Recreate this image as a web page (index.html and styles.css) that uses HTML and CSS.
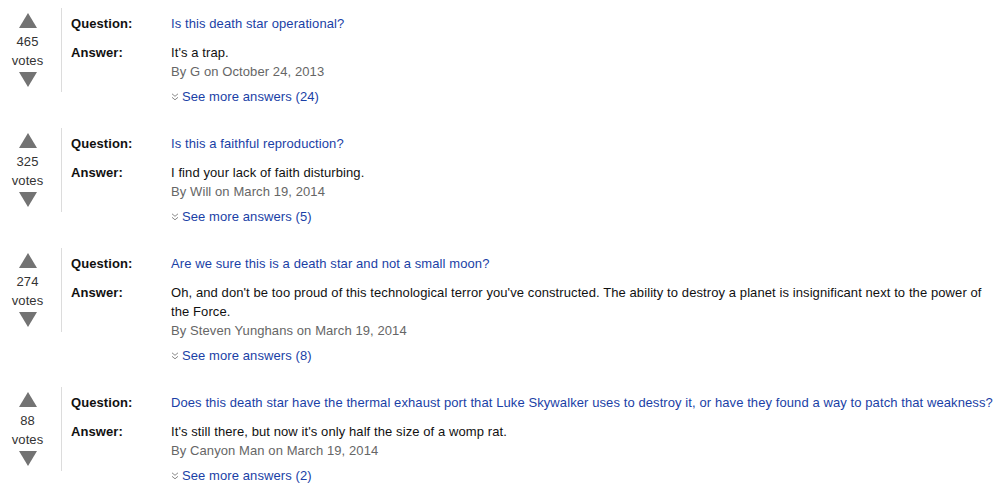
FILE: index.html
```html
<!DOCTYPE html>
<html>
<head>
<meta charset="utf-8">
<link rel="stylesheet" href="styles.css">
</head>
<body>
<div class="qa-list">

  <div class="qa-item">
    <div class="vote">
      <svg class="arrow" width="18" height="15" viewBox="0 0 18 15"><polygon points="9,0 18,15 0,15"/></svg>
      <div class="count">465</div>
      <div class="votes-label">votes</div>
      <svg class="arrow" width="18" height="15" viewBox="0 0 18 15"><polygon points="0,0 18,0 9,15"/></svg>
    </div>
    <div class="qa">
      <div class="label">Question:</div>
      <div class="question"><a href="#">Is this death star operational?</a></div>
      <div class="label">Answer:</div>
      <div class="answer">
        <div class="answer-text">It's a trap.</div>
        <div class="byline">By G on October 24, 2013</div>
        <a class="more" href="#"><svg class="chev" width="8" height="8" viewBox="0 0 8 8"><polyline points="1,0.8 4,3.3 7,0.8"/><polyline points="1,4.3 4,6.8 7,4.3"/></svg>See more answers (24)</a>
      </div>
    </div>
  </div>

  <div class="qa-item">
    <div class="vote">
      <svg class="arrow" width="18" height="15" viewBox="0 0 18 15"><polygon points="9,0 18,15 0,15"/></svg>
      <div class="count">325</div>
      <div class="votes-label">votes</div>
      <svg class="arrow" width="18" height="15" viewBox="0 0 18 15"><polygon points="0,0 18,0 9,15"/></svg>
    </div>
    <div class="qa">
      <div class="label">Question:</div>
      <div class="question"><a href="#">Is this a faithful reproduction?</a></div>
      <div class="label">Answer:</div>
      <div class="answer">
        <div class="answer-text">I find your lack of faith disturbing.</div>
        <div class="byline">By Will on March 19, 2014</div>
        <a class="more" href="#"><svg class="chev" width="8" height="8" viewBox="0 0 8 8"><polyline points="1,0.8 4,3.3 7,0.8"/><polyline points="1,4.3 4,6.8 7,4.3"/></svg>See more answers (5)</a>
      </div>
    </div>
  </div>

  <div class="qa-item">
    <div class="vote">
      <svg class="arrow" width="18" height="15" viewBox="0 0 18 15"><polygon points="9,0 18,15 0,15"/></svg>
      <div class="count">274</div>
      <div class="votes-label">votes</div>
      <svg class="arrow" width="18" height="15" viewBox="0 0 18 15"><polygon points="0,0 18,0 9,15"/></svg>
    </div>
    <div class="qa">
      <div class="label">Question:</div>
      <div class="question"><a href="#">Are we sure this is a death star and not a small moon?</a></div>
      <div class="label">Answer:</div>
      <div class="answer">
        <div class="answer-text">Oh, and don't be too proud of this technological terror you've constructed. The ability to destroy a planet is insignificant next to the power of the Force.</div>
        <div class="byline">By Steven Yunghans on March 19, 2014</div>
        <a class="more" href="#"><svg class="chev" width="8" height="8" viewBox="0 0 8 8"><polyline points="1,0.8 4,3.3 7,0.8"/><polyline points="1,4.3 4,6.8 7,4.3"/></svg>See more answers (8)</a>
      </div>
    </div>
  </div>

  <div class="qa-item">
    <div class="vote">
      <svg class="arrow" width="18" height="15" viewBox="0 0 18 15"><polygon points="9,0 18,15 0,15"/></svg>
      <div class="count">88</div>
      <div class="votes-label">votes</div>
      <svg class="arrow" width="18" height="15" viewBox="0 0 18 15"><polygon points="0,0 18,0 9,15"/></svg>
    </div>
    <div class="qa">
      <div class="label">Question:</div>
      <div class="question"><a href="#">Does this death star have the thermal exhaust port that Luke Skywalker uses to destroy it, or have they found a way to patch that weakness?</a></div>
      <div class="label">Answer:</div>
      <div class="answer">
        <div class="answer-text">It's still there, but now it's only half the size of a womp rat.</div>
        <div class="byline">By Canyon Man on March 19, 2014</div>
        <a class="more" href="#"><svg class="chev" width="8" height="8" viewBox="0 0 8 8"><polyline points="1,0.8 4,3.3 7,0.8"/><polyline points="1,4.3 4,6.8 7,4.3"/></svg>See more answers (2)</a>
      </div>
    </div>
  </div>

</div>
</body>
</html>
```

FILE: styles.css
```css
html, body {
  margin: 0;
  padding: 0;
  background: #fff;
}

body {
  font-family: "Liberation Sans", Arial, sans-serif;
  font-size: 13px;
  line-height: 19px;
  letter-spacing: 0.09px;
  color: #111;
  overflow: hidden;
}

.qa-list {
  padding-top: 8px;
}

.qa-item {
  display: flex;
  align-items: flex-start;
  margin-bottom: 22px;
}

.vote {
  width: 55px;
  padding: 5px 6px 5px 0;
  border-right: 1px solid #dcdcdc;
  display: flex;
  flex-direction: column;
  align-items: center;
  color: #333;
}

.arrow {
  display: block;
  fill: #737373;
}

.count {
  margin-top: 4px;
}

.votes-label {
  margin-bottom: 2px;
}

.qa {
  flex: 1;
  margin-left: 9px;
  padding-top: 6px;
  display: grid;
  grid-template-columns: 100px 1fr;
  row-gap: 10px;
}

.label {
  font-weight: bold;
  color: #111;
}

.question a,
.more {
  color: #1a3fa6;
  text-decoration: none;
}

.byline {
  color: #666;
}

.more {
  display: inline-flex;
  align-items: center;
  margin-top: 6px;
}

.chev {
  display: block;
  margin: 1px 3px 0 0;
  fill: none;
  stroke: #8a8a8a;
  stroke-width: 1;
}
```
